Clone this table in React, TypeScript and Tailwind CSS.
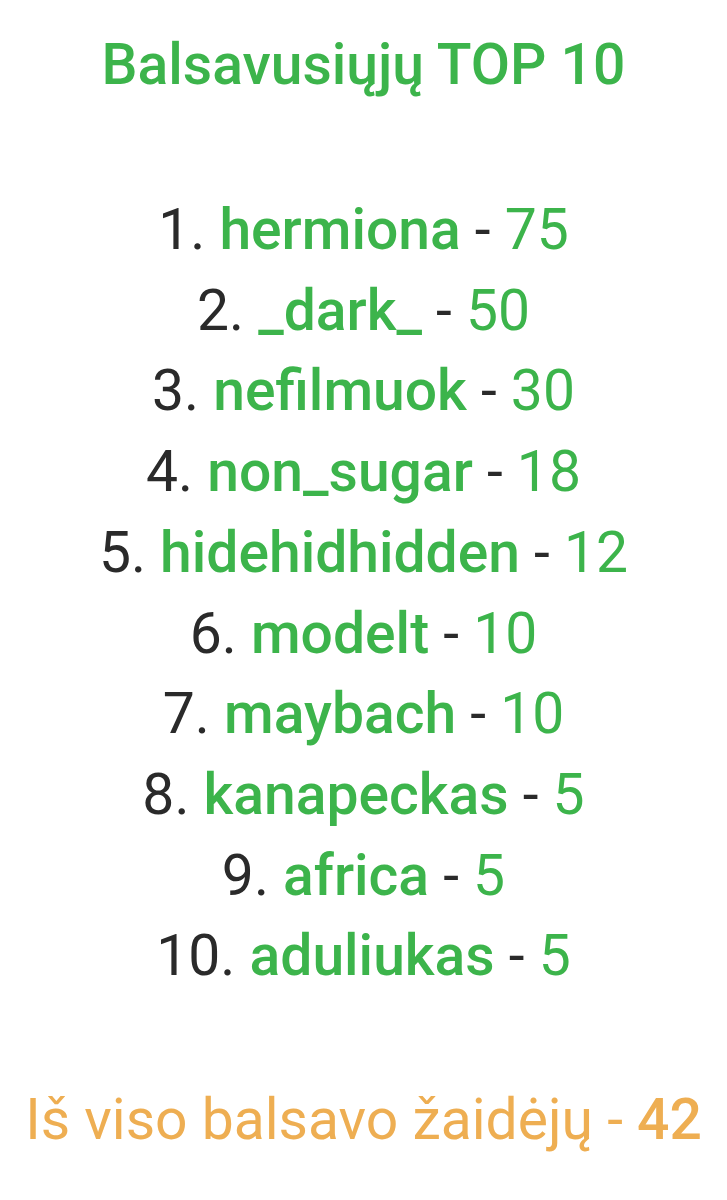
const voters: [string, number][] = [
  ['hermiona', 75],
  ['_dark_', 50],
  ['nefilmuok', 30],
  ['non_sugar', 18],
  ['hidehidhidden', 12],
  ['modelt', 10],
  ['maybach', 10],
  ['kanapeckas', 5],
  ['africa', 5],
  ['aduliukas', 5],
]

export default function App() {
  return (
    <div className="min-h-[1200px] w-full bg-white text-center font-['Roboto',sans-serif]">
      <h1 className="pt-[30px] text-[57px] leading-[70px] font-medium text-[#3cb44b]">Balsavusiųjų TOP 10</h1>

      <ol className="mt-[90px] flex flex-col text-[57px] leading-[80.7px] text-[#2a2a2a]">
        {voters.map(([name, votes], i) => (
          <li key={name}>
            {i + 1}. <span className="font-medium text-[#3cb44b]">{name}</span> -{' '}
            <span className="text-[#3cb44b]">{votes}</span>
          </li>
        ))}
      </ol>

      <p className="mt-[88px] text-[57px] leading-[70px] text-[#eeae52]">
        Iš viso balsavo žaidėjų - <span className="font-medium">42</span>
      </p>
    </div>
  )
}
